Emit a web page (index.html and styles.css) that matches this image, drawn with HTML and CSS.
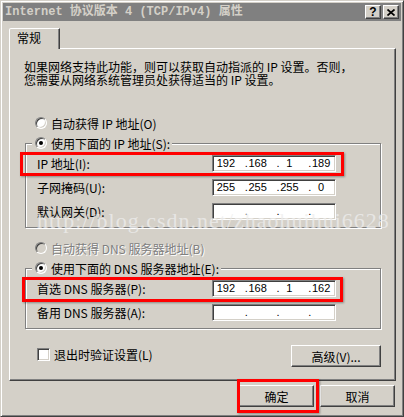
FILE: index.html
```html
<!DOCTYPE html>
<html lang="zh-CN">
<head>
    <meta charset="UTF-8">
    <meta name="viewport" content="width=device-width, initial-scale=1.0">
    <title>Internet 协议版本 4 (TCP/IPv4) 属性</title>
    <link rel="stylesheet" href="styles.css">
</head>
<body>
    <div class="window">
        <!-- Title bar -->
        <div class="titlebar">
            <span class="title">Internet 协议版本 4 (TCP/IPv4) 属性</span>
            <div class="caption-buttons">
                <span class="cap-btn help">?</span>
                <span class="cap-btn close">
                    <svg width="8" height="7" viewBox="0 0 8 7"><path d="M0.5 0.5 L7.5 6.5 M7.5 0.5 L0.5 6.5" stroke="#000" stroke-width="1.7" fill="none"/></svg>
                </span>
            </div>
        </div>

        <div class="content">
            <div class="tabs">
                <div class="tab">常规</div>
            </div>

            <div class="panel">
                <p class="intro">如果网络支持此功能，则可以获取自动指派的 IP 设置。否则，<br>您需要从网络系统管理员处获得适当的 IP 设置。</p>

                <div class="option first"><span class="radio"></span>自动获得 IP 地址(O)</div>
                <fieldset class="group">
                    <legend class="option"><span class="radio checked"></span>使用下面的 IP 地址(S):</legend>
                    <div class="field">
                        <label>IP 地址(I):</label>
                        <div class="input"><div class="ip"><span>192</span><span>168</span><span>1</span><span>189</span></div></div>
                    </div>
                    <div class="field">
                        <label>子网掩码(U):</label>
                        <div class="input"><div class="ip"><span>255</span><span>255</span><span>255</span><span>0</span></div></div>
                    </div>
                    <div class="field">
                        <label>默认网关(D):</label>
                        <div class="input"><div class="ip"><span></span><span></span><span></span><span></span></div></div>
                    </div>
                </fieldset>

                <div class="option disabled"><span class="radio"></span>自动获得 DNS 服务器地址(B)</div>
                <fieldset class="group">
                    <legend class="option"><span class="radio checked"></span>使用下面的 DNS 服务器地址(E):</legend>
                    <div class="field">
                        <label>首选 DNS 服务器(P):</label>
                        <div class="input"><div class="ip"><span>192</span><span>168</span><span>1</span><span>162</span></div></div>
                    </div>
                    <div class="field">
                        <label>备用 DNS 服务器(A):</label>
                        <div class="input"><div class="ip"><span></span><span></span><span></span><span></span></div></div>
                    </div>
                </fieldset>

                <div class="panel-bottom">
                    <label class="check"><span class="checkbox"></span>退出时验证设置(L)</label>
                    <button class="btn advanced">高级(V)...</button>
                </div>
            </div>

            <div class="footer">
                <button class="btn">确定</button>
                <button class="btn">取消</button>
            </div>
        </div>

        <!-- annotations drawn over the dialog -->
        <div class="watermark">http://blog.csdn.net/zhaohuihui6628</div>
        <div class="mark mark-ip"></div>
        <div class="mark mark-dns"></div>
        <div class="mark mark-ok"></div>
    </div>
</body>
</html>
```

FILE: styles.css
```css
* {
    box-sizing: border-box;
}
body {
    margin: 0;
    background-color: #d4d0c8;
    font-family: "Noto Sans CJK SC", sans-serif;
    font-size: 12px;
    color: #000;
}
.window {
    position: relative;
    width: 404px;
    height: 417px;
    padding: 2px;
    background-color: #d4d0c8;
    border: 1px solid;
    border-color: #d4d0c8 #404040 #404040 #d4d0c8;
    box-shadow: inset 1px 1px #fff, inset -1px -1px #808080;
}

/* title bar */
.titlebar {
    height: 18px;
    padding: 0 2px;
    background-color: #808080;
    display: flex;
    align-items: center;
    justify-content: space-between;
}
.title {
    font-family: "Liberation Mono", "Noto Sans CJK SC", monospace;
    font-weight: bold;
    font-size: 12px;
    line-height: 18px;
    color: #d4d0c8;
    white-space: pre;
}
.caption-buttons {
    display: flex;
    gap: 2px;
}
.cap-btn {
    width: 16px;
    height: 14px;
    background-color: #d4d0c8;
    border: 1px solid;
    border-color: #fff #404040 #404040 #fff;
    box-shadow: inset -1px -1px #808080;
    display: flex;
    align-items: center;
    justify-content: center;
    font: bold 12px "Liberation Sans", sans-serif;
}

/* tab + panel */
.content {
    padding: 7px 5px 0 6px;
}
.tabs {
    display: flex;
}
.tab {
    position: relative;
    z-index: 1;
    width: 51px;
    height: 21px;
    margin-bottom: -1px;
    padding: 1px 0 0 7px;
    line-height: 16px;
    background-color: #d4d0c8;
    border: 1px solid;
    border-bottom: none;
    border-color: #fff #404040 transparent #fff;
    border-top-left-radius: 2px;
    box-shadow: inset -1px 0 #808080;
}
.panel {
    height: 333px;
    padding: 11px 0 0 14px;
    border: 1px solid;
    border-color: #fff #404040 #404040 #fff;
    box-shadow: inset -1px -1px #808080;
}
.intro {
    margin: 0;
    line-height: 13px;
}

/* radios */
.option {
    display: flex;
    align-items: center;
    gap: 4px;
    height: 16px;
    padding-left: 11px;
}
.option.first {
    margin-top: 29px;
}
.option.disabled {
    margin-top: 12px;
    color: #808080;
    text-shadow: 1px 1px #fff;
}
.radio {
    width: 12px;
    height: 12px;
    border-radius: 50%;
    background-color: #fff;
    border: 1px solid;
    border-color: #808080 #fff #fff #808080;
    box-shadow: inset 1px 1px #404040, inset -1px -1px #d4d0c8;
    display: flex;
    align-items: center;
    justify-content: center;
}
.disabled .radio {
    background-color: #d4d0c8;
}
.radio.checked::after {
    content: "";
    width: 4px;
    height: 4px;
    border-radius: 50%;
    background-color: #000;
}

/* group boxes */
.group {
    width: 356px;
    margin: 4px 0 0 1px;
    padding: 4px 0 7px 11px;
    min-inline-size: 0;
    border: 1px solid #808080;
    box-shadow: inset 1px 1px #fff, 1px 1px #fff;
}
.group legend.option {
    margin-left: -5px;
    padding: 0 2px 0 3px;
    background-color: #d4d0c8;
}
.field {
    display: flex;
    align-items: center;
    height: 17px;
}
.field + .field {
    margin-top: 7px;
}
.field label {
    width: 175px;
}
.input {
    width: 124px;
    height: 17px;
    background-color: #fff;
    border: 1px solid;
    border-color: #808080 #fff #fff #808080;
    box-shadow: inset 1px 1px #404040, inset -1px -1px #d4d0c8;
}
.ip {
    display: flex;
    width: 127px;
    margin-left: -3px;
    font-family: "Liberation Sans", sans-serif;
    font-size: 11px;
    line-height: 15px;
}
.ip span {
    flex: 1;
    position: relative;
    text-align: center;
}
.ip span + span::before {
    content: ".";
    position: absolute;
    left: 3px;
}

/* bottom of panel */
.panel-bottom {
    width: 356px;
    margin: 16px 0 0 1px;
    padding-left: 12px;
    display: flex;
    justify-content: space-between;
    align-items: flex-start;
}
.check {
    display: flex;
    align-items: center;
    gap: 4px;
    height: 16px;
    margin-top: 1px;
}
.checkbox {
    width: 13px;
    height: 13px;
    background-color: #fff;
    border: 1px solid;
    border-color: #808080 #fff #fff #808080;
    box-shadow: inset 1px 1px #404040, inset -1px -1px #d4d0c8;
}
.btn {
    width: 75px;
    height: 22px;
    padding: 0;
    font-family: "Noto Sans CJK SC", sans-serif;
    font-size: 12px;
    color: #000;
    background-color: #d4d0c8;
    border: 1px solid;
    border-color: #fff #404040 #404040 #fff;
    box-shadow: inset -1px -1px #808080;
}
.btn.advanced {
    width: 90px;
}
.footer {
    display: flex;
    justify-content: flex-end;
    gap: 6px;
    margin-top: 4px;
    padding-right: 1px;
}

/* annotations */
.watermark {
    position: absolute;
    left: 36px;
    top: 208px;
    font-family: "Liberation Serif", serif;
    font-size: 22px;
    line-height: 24px;
    letter-spacing: 1px;
    color: rgba(238, 238, 238, 0.75);
    white-space: nowrap;
}
.mark {
    position: absolute;
    border: 3px solid #f00;
    box-shadow: 1px 1px 2px rgba(0, 0, 0, 0.35);
}
.mark-ip {
    left: 19px;
    top: 151px;
    width: 324px;
    height: 24px;
}
.mark-dns {
    left: 21px;
    top: 276px;
    width: 321px;
    height: 25px;
}
.mark-ok {
    left: 236px;
    top: 378px;
    width: 82px;
    height: 34px;
}
```
